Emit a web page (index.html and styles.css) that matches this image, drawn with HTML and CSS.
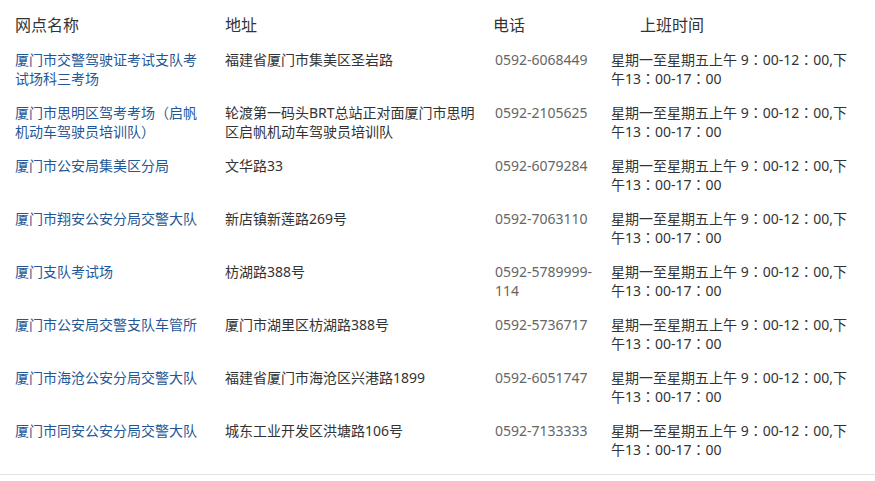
FILE: index.html
```html
<!DOCTYPE html>
<html lang="zh-CN">
<head>
<meta charset="utf-8">
<title>网点</title>
<link rel="stylesheet" href="styles.css">
</head>
<body>
<div class="wrap">
<table class="sites">
  <colgroup>
    <col class="c-name"><col class="c-addr"><col class="c-tel"><col class="c-time">
  </colgroup>
  <thead>
    <tr>
      <th class="name">网点名称</th>
      <th class="addr">地址</th>
      <th class="tel">电话</th>
      <th class="time">上班时间</th>
    </tr>
  </thead>
  <tbody>
    <tr>
      <td class="name">厦门市交警驾驶证考试支队考试场科三考场</td>
      <td class="addr">福建省厦门市集美区圣岩路</td>
      <td class="tel">0592-6068449</td>
      <td class="time">星期一至星期五上午 9<span class="c" lang="zh-TW">：</span>00-12<span class="c" lang="zh-TW">：</span>00,下午13<span class="c" lang="zh-TW">：</span>00-17<span class="c" lang="zh-TW">：</span>00</td>
    </tr>
    <tr>
      <td class="name">厦门市思明区驾考考场（启帆机动车驾驶员培训队）</td>
      <td class="addr">轮渡第一码头BRT总站正对面厦门市思明区启帆机动车驾驶员培训队</td>
      <td class="tel">0592-2105625</td>
      <td class="time">星期一至星期五上午 9<span class="c" lang="zh-TW">：</span>00-12<span class="c" lang="zh-TW">：</span>00,下午13<span class="c" lang="zh-TW">：</span>00-17<span class="c" lang="zh-TW">：</span>00</td>
    </tr>
    <tr>
      <td class="name">厦门市公安局集美区分局</td>
      <td class="addr">文华路33</td>
      <td class="tel">0592-6079284</td>
      <td class="time">星期一至星期五上午 9<span class="c" lang="zh-TW">：</span>00-12<span class="c" lang="zh-TW">：</span>00,下午13<span class="c" lang="zh-TW">：</span>00-17<span class="c" lang="zh-TW">：</span>00</td>
    </tr>
    <tr>
      <td class="name">厦门市翔安公安分局交警大队</td>
      <td class="addr">新店镇新莲路269号</td>
      <td class="tel">0592-7063110</td>
      <td class="time">星期一至星期五上午 9<span class="c" lang="zh-TW">：</span>00-12<span class="c" lang="zh-TW">：</span>00,下午13<span class="c" lang="zh-TW">：</span>00-17<span class="c" lang="zh-TW">：</span>00</td>
    </tr>
    <tr>
      <td class="name">厦门支队考试场</td>
      <td class="addr">枋湖路388号</td>
      <td class="tel">0592-5789999-114</td>
      <td class="time">星期一至星期五上午 9<span class="c" lang="zh-TW">：</span>00-12<span class="c" lang="zh-TW">：</span>00,下午13<span class="c" lang="zh-TW">：</span>00-17<span class="c" lang="zh-TW">：</span>00</td>
    </tr>
    <tr>
      <td class="name">厦门市公安局交警支队车管所</td>
      <td class="addr">厦门市湖里区枋湖路388号</td>
      <td class="tel">0592-5736717</td>
      <td class="time">星期一至星期五上午 9<span class="c" lang="zh-TW">：</span>00-12<span class="c" lang="zh-TW">：</span>00,下午13<span class="c" lang="zh-TW">：</span>00-17<span class="c" lang="zh-TW">：</span>00</td>
    </tr>
    <tr>
      <td class="name">厦门市海沧公安分局交警大队</td>
      <td class="addr">福建省厦门市海沧区兴港路1899</td>
      <td class="tel">0592-6051747</td>
      <td class="time">星期一至星期五上午 9<span class="c" lang="zh-TW">：</span>00-12<span class="c" lang="zh-TW">：</span>00,下午13<span class="c" lang="zh-TW">：</span>00-17<span class="c" lang="zh-TW">：</span>00</td>
    </tr>
    <tr>
      <td class="name">厦门市同安公安分局交警大队</td>
      <td class="addr">城东工业开发区洪塘路106号</td>
      <td class="tel">0592-7133333</td>
      <td class="time">星期一至星期五上午 9<span class="c" lang="zh-TW">：</span>00-12<span class="c" lang="zh-TW">：</span>00,下午13<span class="c" lang="zh-TW">：</span>00-17<span class="c" lang="zh-TW">：</span>00</td>
    </tr>
  </tbody>
</table>
</div>
</body>
</html>
```

FILE: styles.css
```css
html, body {
  margin: 0;
  padding: 0;
  background: #fff;
}
body {
  font-family: "Noto Sans", "Noto Sans CJK SC", sans-serif;
  color: #333;
}
.wrap {
  width: 875px;
  padding-bottom: 7px;
  border-bottom: 1px solid #e3e3e3;
}
.sites {
  width: 875px;
  border-collapse: collapse;
  table-layout: fixed;
}
.c-name { width: 225px; }
.c-addr { width: 268px; }
.c-tel { width: 118px; }
.c-time { width: 264px; }

.sites th {
  font-weight: normal;
  font-size: 16px;
  line-height: 22px;
  text-align: left;
  color: #333;
  padding: 14px 0 7px 0;
  vertical-align: top;
}
.sites td {
  font-size: 14px;
  line-height: 19px;
  padding: 7px 0 8px 0;
  vertical-align: top;
  text-align: left;
}
.sites th.name, .sites td.name { padding-left: 15px; padding-right: 20px; }
.sites th.addr, .sites td.addr { padding-left: 0; padding-right: 12px; }
.sites th.tel { padding-left: 0; padding-right: 8px; }
.sites td.tel { padding-left: 2px; padding-right: 8px; color: #666; }
.sites th.time { padding-left: 29px; }
.sites td.time { padding-right: 22px; color: #333; }
.sites td.name { color: #1f5797; }
.c {
  font-family: "Noto Sans CJK TC", "Noto Sans CJK JP", sans-serif;
  font-feature-settings: "locl" 0;
}
```
